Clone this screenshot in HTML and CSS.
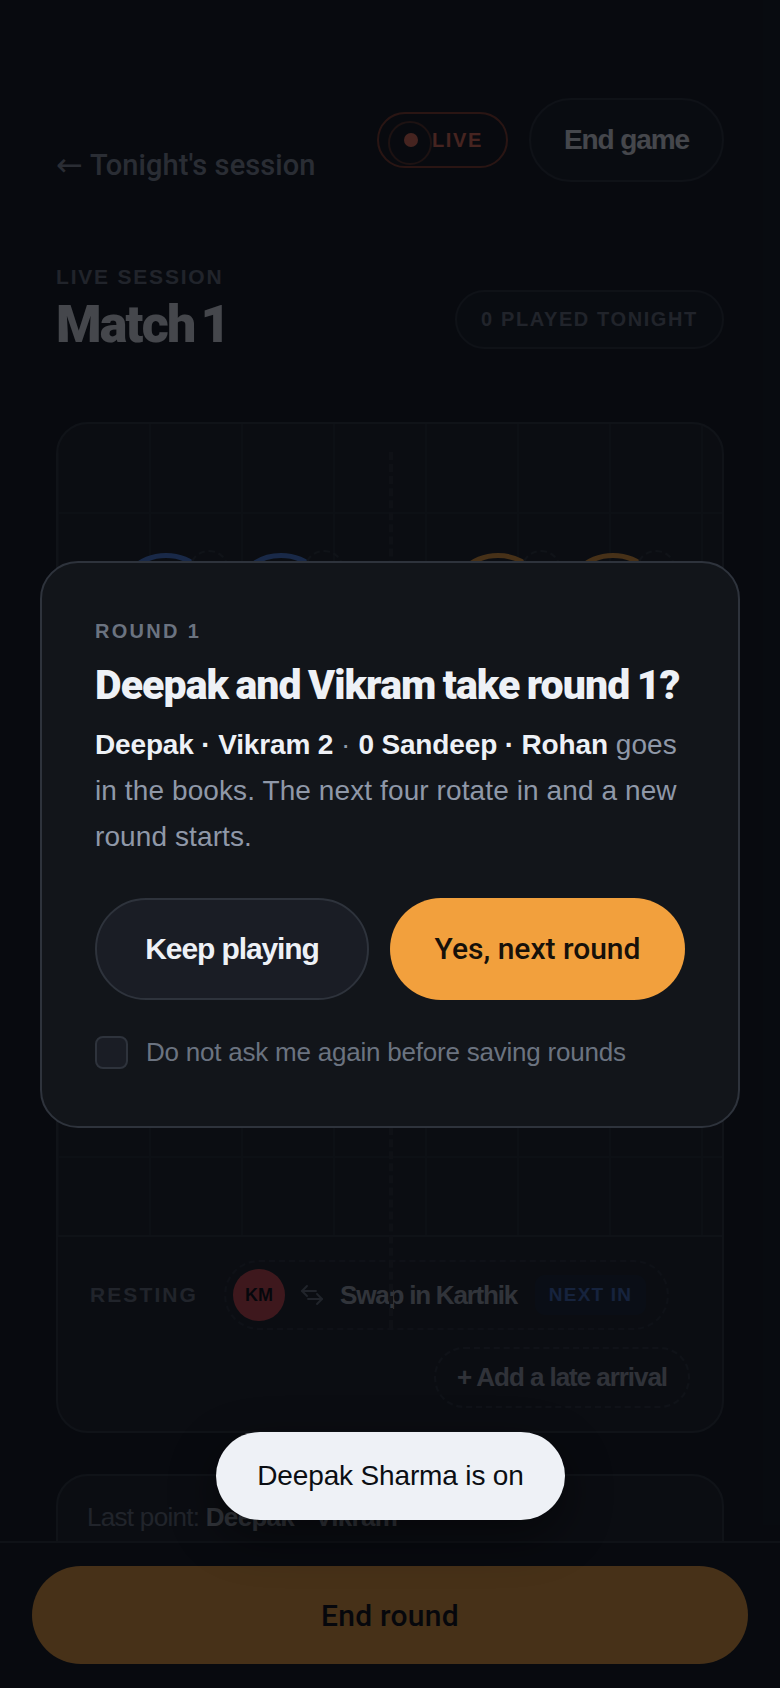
FILE: index.html
```html
<!DOCTYPE html>
<html lang="en">
<head>
<meta charset="utf-8">
<title>Match 1</title>
<link rel="stylesheet" href="styles.css">
</head>
<body>
<div class="page">
  <header class="topbar">
    <a class="back"><span class="back-arrow">←</span>Tonight's session</a>
    <div class="top-actions">
      <span class="live"><span class="live-dot"></span>LIVE</span>
      <button class="end-game">End game</button>
    </div>
  </header>
  <section class="heading">
    <div>
      <div class="eyebrow">LIVE SESSION</div>
      <h1 class="match">Match 1</h1>
    </div>
    <span class="played">0 PLAYED TONIGHT</span>
  </section>
  <section class="court-card">
    <div class="court">
      <div class="net"></div>
      <div class="players">
        <div class="team">
          <div class="player blue"><span class="mini"></span></div>
          <div class="player blue"><span class="mini"></span></div>
        </div>
        <div class="team">
          <div class="player amber"><span class="mini"></span></div>
          <div class="player amber"><span class="mini"></span></div>
        </div>
      </div>
    </div>
    <div class="rest">
      <div class="rest-row">
        <span class="rest-label">RESTING</span>
        <div class="swap">
          <span class="avatar">KM</span>
          <svg class="swap-icon" viewBox="0 0 24 20" fill="none" stroke="currentColor" stroke-width="1.8" stroke-linecap="round" stroke-linejoin="round"><path d="M7 1 2 6l5 5"/><path d="M2 6h14"/><path d="m17 9 5 5-5 5"/><path d="M22 14H8"/></svg>
          <span class="swap-name">Swap in Karthik</span>
          <span class="next-in">NEXT IN</span>
        </div>
      </div>
      <div class="add-row"><button class="add">+ Add a late arrival</button></div>
    </div>
  </section>
  <section class="last-card">Last point: <strong>Deepak · Vikram</strong></section>
</div>
<footer class="footer"><button class="end-round">End round</button></footer>
<div class="scrim"></div>
<div class="modal-wrap">
  <div class="modal">
    <div class="modal-eyebrow">ROUND 1</div>
    <h2 class="modal-title">Deepak and Vikram take round 1?</h2>
    <p class="modal-body"><strong>Deepak · Vikram 2</strong> · <strong>0 Sandeep · Rohan</strong> goes in the books. The next four rotate in and a new round starts.</p>
    <div class="modal-actions">
      <button class="btn btn-keep">Keep playing</button>
      <button class="btn btn-yes">Yes, next round</button>
    </div>
    <label class="ask"><span class="check"></span>Do not ask me again before saving rounds</label>
  </div>
</div>
<div class="toast">Deepak Sharma is on</div>
</body>
</html>
```
FILE: styles.css
```css
* { box-sizing: border-box; }
html, body { margin: 0; height: 100%; }
body {
  background: #12181f;
  font-family: "Liberation Sans", Arial, sans-serif;
  color: #eef1f6;
  overflow: hidden;
  position: relative;
}
button { font: inherit; color: inherit; background: none; border: 0; padding: 0; }
.page { padding: 98px 56px 0 56px; height: 1688px; overflow: hidden; }

.topbar { display: flex; justify-content: space-between; align-items: flex-end; }
.back { font-family: Roboto, sans-serif; font-size: 29px; line-height: 34px; font-weight: 500; color: #8b94a3; letter-spacing: 0.1px; display: flex; align-items: center; }
.back-arrow { font-family: "DejaVu Sans", sans-serif; font-size: 32px; margin-right: 7px; }
.top-actions { display: flex; align-items: center; gap: 21px; }
.live { width: 131px; height: 56px; border: 2px solid #8c3f2e; border-radius: 28px; display: flex; align-items: center; font-size: 20px; font-weight: 700; color: #f0735a; letter-spacing: 1.6px; padding-left: 25px; position: relative; }
.live-dot { width: 14px; height: 14px; border-radius: 50%; background: #f0735a; margin-right: 14px; flex: none; }
.live-dot::after { content: ""; position: absolute; left: 9px; top: 7px; width: 40px; height: 40px; border-radius: 50%; border: 2px solid #5e3228; }
.end-game { width: 195px; height: 84px; border: 2px solid #2c323b; border-radius: 42px; background: #181e26; font-size: 28px; font-weight: 700; letter-spacing: -1.1px; }

.heading { display: flex; justify-content: space-between; align-items: flex-end; margin-top: 82px; }
.eyebrow { font-size: 21px; line-height: 26px; letter-spacing: 1.8px; color: #6b7380; font-weight: 700; }
.match { margin: 7px 0 0; font-family: Roboto, sans-serif; font-size: 52px; line-height: 56px; font-weight: 900; letter-spacing: -1.8px; word-spacing: -5px; color: #eef1f6; }
.played { width: 269px; height: 59px; border: 2px solid #2c323b; border-radius: 30px; background: #181e26; display: flex; align-items: center; justify-content: center; font-size: 20px; font-weight: 700; letter-spacing: 1.6px; color: #6b7380; margin-bottom: 4px; }

.court-card { margin-top: 69px; border: 2px solid #31373f; border-radius: 32px; background: #1d232a; height: 1011px; }
.court {
  height: 813px; position: relative; border-radius: 30px 30px 0 0;
  background-image: linear-gradient(90deg, #252b32 2px, transparent 2px), linear-gradient(#252b32 2px, transparent 2px);
  background-size: 92px 92px;
  background-position: -1px -4px;
  border-bottom: 2px solid #2c323a;
}
.net { position: absolute; left: 331px; top: 28px; bottom: -93px; width: 0; border-left: 4px dashed #2b3038; }
.players { display: flex; position: absolute; left: 56px; right: 0; top: 129px; }
.team { display: flex; gap: 11px; width: 270px; }
.team + .team { margin-left: 62px; }
.player { width: 104px; height: 104px; border-radius: 50%; border: 5px solid; position: relative; }
.blue { border-color: #4f86e8; }
.amber { border-color: #f2a03d; }
.mini { position: absolute; right: -16px; top: -8px; width: 40px; height: 40px; border-radius: 50%; border: 2px dashed #31373f; }

.rest { padding: 23px 32px 0 32px; }
.rest-row { display: flex; align-items: center; }
.rest-label { font-size: 21px; font-weight: 700; letter-spacing: 2.1px; color: #6b7380; width: 134px; flex: none; }
.swap { width: 445px; height: 70px; border: 2px dashed #2b313a; border-radius: 35px; display: flex; align-items: center; padding-left: 7px; }
.avatar { width: 52px; height: 52px; border-radius: 50%; background: #d44a4f; color: #0b0e13; font-size: 18px; font-weight: 700; display: flex; align-items: center; justify-content: center; flex: none; }
.swap-icon { width: 24px; height: 20px; margin-left: 15px; color: #6b7380; flex: none; }
.swap-name { margin-left: 16px; font-size: 26px; font-weight: 700; letter-spacing: -1.2px; color: #a6acb6; white-space: nowrap; }
.next-in { margin-left: 18px; width: 111px; height: 40px; border-radius: 10px; background: #1a2638; color: #456fc0; font-size: 19px; font-weight: 700; letter-spacing: 1.2px; display: flex; align-items: center; justify-content: center; }
.add-row { display: flex; justify-content: flex-end; margin-top: 17px; }
.add { width: 256px; height: 61px; border: 2px dashed #2f353e; border-radius: 30px; font-size: 26px; font-weight: 700; letter-spacing: -1.05px; color: #a0a7b2; }

.last-card { margin-top: 41px; height: 200px; border: 2px solid #31373f; border-radius: 32px; background: #1d232a; padding: 26px 29px; font-size: 26px; letter-spacing: -0.7px; color: #6b7380; }
.last-card strong { color: #a6acb6; }

.footer { position: absolute; left: 0; right: 0; bottom: 0; height: 147px; background: #12181f; border-top: 2px solid #2c323b; padding: 23px 32px 0; }
.end-round { width: 716px; height: 98px; border-radius: 49px; background: #f2a03d; color: #0b0e13; font-family: Roboto, sans-serif; font-size: 30px; font-weight: 500; letter-spacing: 0.25px; }

.scrim { position: absolute; inset: 0; background: rgba(4, 6, 10, 0.72); }
.modal-wrap { position: absolute; inset: 0; display: flex; align-items: center; justify-content: center; padding: 0 40px; }
.modal { width: 100%; height: 567px; background: #12151a; border: 2px solid #2e333c; border-radius: 38px; padding: 56px 53px 0; }
.modal-eyebrow { font-size: 20px; line-height: 24px; letter-spacing: 2.3px; font-weight: 700; color: #6b7380; }
.modal-title { margin: 18px 0 0; font-family: Roboto, sans-serif; font-size: 41px; line-height: 48px; font-weight: 900; letter-spacing: -0.9px; word-spacing: -2px; color: #eef1f6; white-space: nowrap; }
.modal-body { margin: 13px 0 0; font-size: 28px; line-height: 46px; letter-spacing: 0.1px; color: #8f98a8; }
.modal-body strong { color: #eef1f6; font-weight: 700; letter-spacing: -0.15px; }
.modal-actions { display: flex; gap: 21px; margin-top: 38px; }
.btn { height: 102px; border-radius: 51px; font-size: 30px; font-weight: 700; letter-spacing: -1.1px; }
.btn-keep { width: 275px; background: #1a1d25; border: 2px solid #2e333c; color: #eef1f6; }
.btn-yes { width: 296px; background: #f2a03d; color: #17110a; font-family: Roboto, sans-serif; font-weight: 500; letter-spacing: 0; }
.ask { display: flex; align-items: center; gap: 18px; margin-top: 36px; font-size: 26px; letter-spacing: -0.22px; color: #6b7380; }
.check { width: 33px; height: 33px; border: 2px solid #2e333c; border-radius: 8px; background: #1a1d25; flex: none; }

.toast { position: absolute; left: 216px; width: 349px; bottom: 168px; height: 88px; background: #eef1f6; color: #0b0e13; border-radius: 44px; display: flex; align-items: center; justify-content: center; font-size: 28px; letter-spacing: -0.15px; box-shadow: 0 16px 48px rgba(0, 0, 0, 0.45); }
```
